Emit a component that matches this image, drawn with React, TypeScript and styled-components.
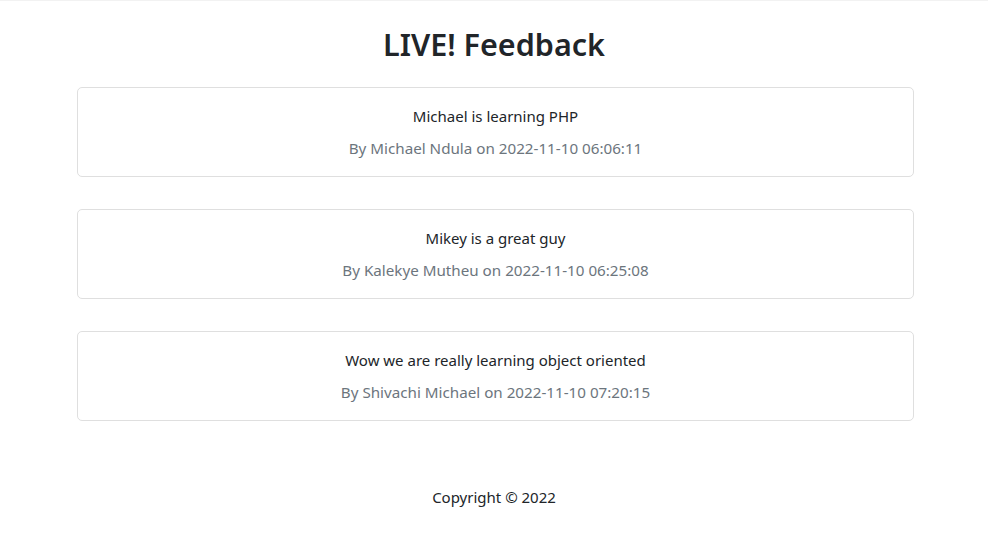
import React from "react";
import styled, { createGlobalStyle } from "styled-components";

const Global = createGlobalStyle`
  html, body { margin: 0; padding: 0; background: #fff; }
  body {
    font-family: "Noto Sans", "Open Sans", sans-serif;
    color: #212529;
    font-size: 16px;
    line-height: 1.5;
  }
`;

const Page = styled.div`
  border-top: 1px solid #f2f2f2;
  display: flex;
  flex-direction: column;
  align-items: center;
`;

const Title = styled.h1`
  margin: 25px 0 24px;
  font-size: 30.5px;
  font-weight: 600;
  line-height: 1.2;
  color: #212529;
`;

const List = styled.div`
  width: 837px;
  display: flex;
  flex-direction: column;
  gap: 32px;
  margin-left: 3px;
`;

const Card = styled.div`
  border: 1px solid #dfdfdf;
  border-radius: 5px;
  padding: 16px;
  display: flex;
  flex-direction: column;
  align-items: center;
  gap: 8px;
  text-align: center;
`;

const Message = styled.div`
  font-size: 15px;
  line-height: 24px;
  color: #212529;
`;

const Meta = styled.div`
  font-size: 15.2px;
  line-height: 24px;
  color: #6c757d;
`;

const Footer = styled.footer`
  margin-top: 64px;
  font-size: 15px;
  line-height: 24px;
  color: #212529;
`;

const items = [
  { msg: "Michael is learning PHP", by: "Michael Ndula", at: "2022-11-10 06:06:11" },
  { msg: "Mikey is a great guy", by: "Kalekye Mutheu", at: "2022-11-10 06:25:08" },
  { msg: "Wow we are really learning object oriented", by: "Shivachi Michael", at: "2022-11-10 07:20:15" },
];

export default function App() {
  return (
    <>
      <Global />
      <Page>
        <Title>LIVE! Feedback</Title>
        <List>
          {items.map((it) => (
            <Card key={it.at}>
              <Message>{it.msg}</Message>
              <Meta>
                By {it.by} on {it.at}
              </Meta>
            </Card>
          ))}
        </List>
        <Footer>Copyright © 2022</Footer>
      </Page>
    </>
  );
}
